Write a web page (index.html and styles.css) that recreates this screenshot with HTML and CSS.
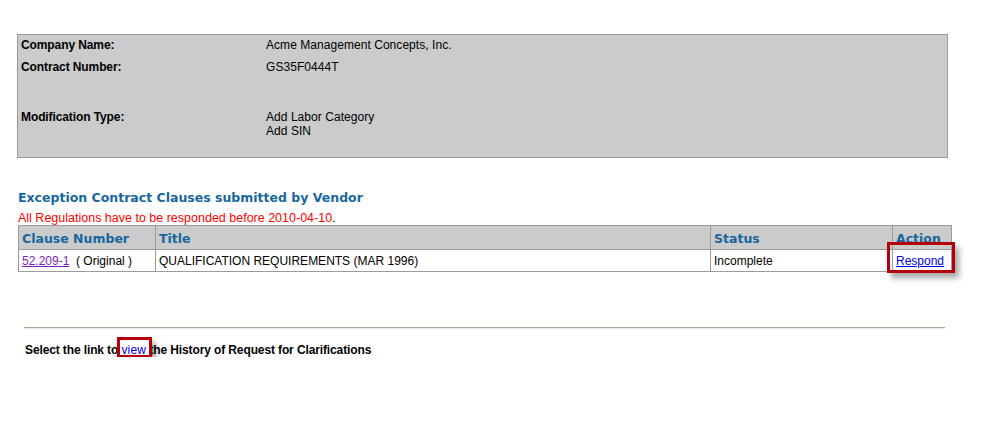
FILE: index.html
```html
<!DOCTYPE html>
<html>
<head>
<meta charset="utf-8">
<link rel="stylesheet" href="styles.css">
</head>
<body>
<div class="page">
  <div class="info">
    <div class="info-row r1"><div class="lbl">Company Name:</div><div class="val">Acme Management Concepts, Inc.</div></div>
    <div class="info-row r2"><div class="lbl">Contract Number:</div><div class="val">GS35F0444T</div></div>
    <div class="info-row r3"><div class="lbl">Modification Type:</div><div class="val">Add Labor Category<br>Add SIN</div></div>
  </div>

  <h2 class="heading">Exception Contract Clauses submitted by Vendor</h2>
  <div class="warn"><span class="red">All Regulations have to be responded before 2010-04-10</span>.</div>

  <table class="clauses">
    <colgroup>
      <col class="c1"><col class="c2"><col class="c3"><col class="c4">
    </colgroup>
    <thead>
      <tr><th>Clause Number</th><th>Title</th><th>Status</th><th>Action</th></tr>
    </thead>
    <tbody>
      <tr>
        <td><a class="visited" href="#">52.209-1</a>&nbsp; ( Original )</td>
        <td>QUALIFICATION REQUIREMENTS (MAR 1996)</td>
        <td>Incomplete</td>
        <td><a class="link hl hl-respond" href="#">Respond</a></td>
      </tr>
    </tbody>
  </table>

  <div class="rule"></div>

  <p class="history">Select the link to <a class="link hl hl-view" href="#">view</a> the History of Request for Clarifications</p>
</div>
</body>
</html>
```

FILE: styles.css
```css
html, body {
  margin: 0;
  padding: 0;
  background: #ffffff;
}
body {
  font-family: "Liberation Sans", Arial, sans-serif;
  font-size: 12px;
  line-height: 14px;
  color: #000;
}
.page {
  padding: 34px 0 0 17px;
  width: 934px;
}
.info {
  width: 929px;
  height: 119px;
  padding-top: 3px;
  background: #cbcbcb;
  border: 1px solid #9a9a9a;
}
.info-row {
  display: grid;
  grid-template-columns: 245px 1fr;
  padding-left: 3px;
}
.info-row.r1 { height: 22px; }
.info-row.r2 { height: 50px; }
.val { letter-spacing: 0.05px; }
.lbl {
  font-weight: bold;
  letter-spacing: -0.1px;
}
.heading {
  margin: 32px 0 0 1px;
  font-family: "DejaVu Sans", Verdana, sans-serif;
  font-size: 12.5px;
  line-height: 16px;
  font-weight: bold;
  color: #17679e;
}
.warn {
  margin: 5px 0 0 1px;
  height: 14px;
  line-height: 14px;
  font-size: 12.5px;
}
.red { color: #ff0000; }
.clauses {
  margin: 0 0 0 1px;
  width: 933px;
  border-collapse: collapse;
  table-layout: fixed;
}
.c1 { width: 137px; }
.c2 { width: 555px; }
.c3 { width: 182px; }
.c4 { width: 59px; }
.clauses th, .clauses td {
  border: 1px solid #9c9c9c;
  text-align: left;
  vertical-align: middle;
  padding: 0 3px;
  white-space: nowrap;
}
.clauses th {
  background: #cbcbcb;
  height: 21px;
  padding-top: 2px;
  font-family: "DejaVu Sans", Verdana, sans-serif;
  font-size: 12.5px;
  font-weight: bold;
  color: #17679e;
}
.clauses td {
  height: 21px;
}
a.visited { color: #7a1fc0; text-decoration: underline; }
a.link { color: #0000ee; text-decoration: underline; }
.hl { position: relative; }
.hl::after {
  content: "";
  position: absolute;
  border: 3px solid #b5000c;
  box-shadow: 4px 5px 6px rgba(0, 0, 0, 0.35);
  pointer-events: none;
}
.hl-respond::after {
  left: -9px;
  right: -11px;
  top: -12px;
  bottom: -5px;
}
.hl-view::after {
  left: -4px;
  right: -6px;
  top: -6px;
  bottom: -1px;
}
.rule {
  margin: 55px 0 0 7px;
  width: 921px;
  height: 0;
  border-top: 1px solid #a9a795;
  border-bottom: 1px solid #ecebe3;
}
.history {
  margin: 14px 0 0 8px;
  font-weight: bold;
  letter-spacing: -0.12px;
}
.history a { font-weight: normal; letter-spacing: 0.2px; }
```
